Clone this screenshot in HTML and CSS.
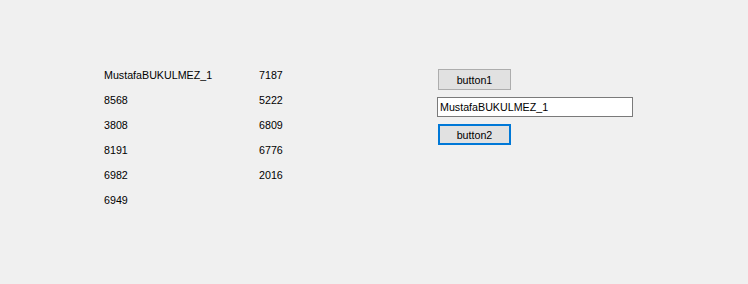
FILE: index.html
```html
<!DOCTYPE html>
<html lang="tr">
  <head>
    <meta charset="UTF-8" />
    <meta name="viewport" content="width=device-width, initial-scale=1.0" />
    <title>Form1</title>
    <link rel="stylesheet" href="styles.css">
  </head>
  <body>
    <main class="form">
      <section class="etiketler">
        <span>MustafaBUKULMEZ_1</span>
        <span>7187</span>
        <span>8568</span>
        <span>5222</span>
        <span>3808</span>
        <span>6809</span>
        <span>8191</span>
        <span>6776</span>
        <span>6982</span>
        <span>2016</span>
        <span>6949</span>
      </section>
      <section class="kontroller">
        <button class="knap">button1</button>
        <input class="tekstkutu" type="text" value="MustafaBUKULMEZ_1">
        <button class="knap aktif">button2</button>
      </section>
    </main>
  </body>
</html>
```

FILE: styles.css
```css
html, body {
  margin: 0;
  background: #f0f0f0;
  height: 100%;
}
body {
  font-family: "Liberation Sans", Arial, sans-serif;
  font-size: 10.7px;
  color: #000;
}
.form {
  display: flex;
  padding: 62px 0 0 104px;
}
.etiketler {
  display: grid;
  grid-template-columns: 155px 178px;
  grid-auto-rows: 25px;
  line-height: 25px;
  padding-top: 1px;
}
.kontroller {
  display: flex;
  flex-direction: column;
  align-items: flex-start;
  gap: 7px;
  padding-top: 7px;
}
.knap {
  box-sizing: border-box;
  width: 73px;
  height: 21px;
  margin-left: 1px;
  border: 1px solid #adadad;
  background: #e1e1e1;
  font: inherit;
  color: #000;
  padding: 0;
}
.knap.aktif {
  border: 2px solid #0078d7;
}
.tekstkutu {
  box-sizing: border-box;
  width: 196px;
  height: 20px;
  border: 1px solid #7a7a7a;
  background: #fff;
  font: inherit;
  padding: 0 2px;
  margin: 0;
  outline: none;
}
```
